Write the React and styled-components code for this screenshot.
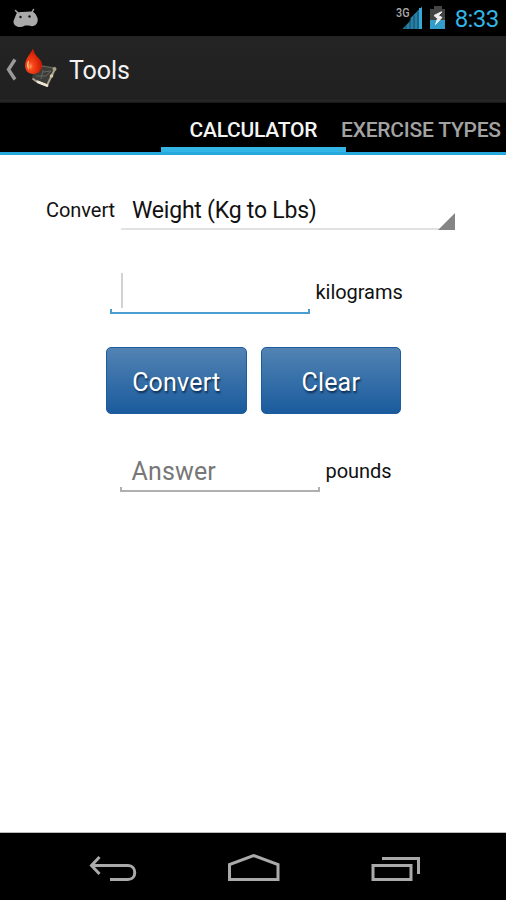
import React from 'react';
import styled, { createGlobalStyle } from 'styled-components';

const GlobalStyle = createGlobalStyle`
  * {
    box-sizing: border-box;
  }
  body {
    margin: 0;
    background: #fff;
    font-family: Roboto, "Liberation Sans", sans-serif;
  }
  button {
    font-family: inherit;
  }
`

const Screen = styled.div`
  width: 506px;
  height: 900px;
  display: flex;
  flex-direction: column;
  overflow: hidden;
  background: #fff;
`

const StatusBar = styled.header`
  height: 36px;
  flex: none;
  display: flex;
  align-items: flex-start;
  justify-content: space-between;
  padding: 0 8px 0 12px;
  background: #000;
`

const StatusIcons = styled.div`
  display: flex;
  gap: 8px;
`

const Clock = styled.span`
  color: #33b5e5;
  font-size: 24px;
  line-height: 38px;
  letter-spacing: -0.6px;
  margin-left: 1px;
  margin-right: -0.6px;
`

const ActionBar = styled.div`
  height: 67px;
  flex: none;
  display: flex;
  background: linear-gradient(#242424, #202020 94%, #2a2a2a 97%, #151515);
`

const Title = styled.h1`
  margin: 0 0 0 9px;
  color: #f3f3f3;
  font-size: 25px;
  font-weight: 400;
  line-height: 69px;
  letter-spacing: -0.1px;
`

const Tabs = styled.nav`
  height: 52px;
  flex: none;
  display: flex;
  padding-left: 161px;
  background: #000;
  border-bottom: 3px solid #26a8dc;
`

const Tab = styled.div`
  flex: none;
  width: ${props => props.$active ? '185px' : '160px'};
  padding-left: ${props => props.$active ? '28.5px' : '0'};
  margin-left: ${props => props.$active ? '0' : '-5px'};
  border-bottom: ${props => props.$active ? '5px solid #33b5e5' : 'none'};
  color: ${props => props.$active ? '#f5f5f5' : '#a3a3a3'};
  font-size: 21px;
  font-weight: 500;
  line-height: 54px;
  height: 49px;
  letter-spacing: ${props => props.$active ? '-0.25px' : '-0.22px'};
  white-space: nowrap;
`

const Content = styled.main`
  flex: 1;
  border-bottom: 1px solid #bbb;
`

const Row = styled.div`
  display: flex;
  height: ${props => props.$height}px;
  margin-top: ${props => props.$top}px;
  padding-left: ${props => props.$left}px;
`

const Label = styled.label`
  color: #111;
  font-size: 20px;
  line-height: ${props => props.$line}px;
  letter-spacing: -0.05px;
  margin-left: ${props => props.$gap || 0}px;
  width: ${props => props.$width ? props.$width + 'px' : 'auto'};
  white-space: nowrap;
`

const Spinner = styled.div`
  display: flex;
  align-items: flex-end;
  justify-content: space-between;
  width: 334px;
  height: 39px;
  padding-left: 11px;
  background: linear-gradient(#e2e2e2, #e2e2e2) 0 37px / 318px 2px no-repeat;
  color: #111;
  font-size: 23px;
  line-height: 39px;
  letter-spacing: -0.22px;
`

const Corner = styled.span`
  width: 17px;
  height: 17px;
  background: #858585;
  clip-path: polygon(100% 0, 100% 100%, 0 100%);
`

const Field = styled.div`
  width: ${props => props.$width}px;
  height: 100%;
  padding-left: 11.5px;
  background:
    linear-gradient(${props => props.$color}, ${props => props.$color}) left bottom / 2px 5px no-repeat,
    linear-gradient(${props => props.$color}, ${props => props.$color}) right bottom / 2px 5px no-repeat,
    linear-gradient(${props => props.$color}, ${props => props.$color}) left bottom / 100% 2px no-repeat;
  color: #777;
  font-size: 25px;
  line-height: 41px;
  letter-spacing: 0.15px;
`

const Cursor = styled.span`
  display: block;
  width: 2px;
  height: 35px;
  margin-left: -0.5px;
  background: #d2d2d2;
`

const Button = styled.button`
  width: 140.5px;
  height: 67px;
  margin-right: 14px;
  padding: 3px 0 0;
  border: 1px solid #1c5b9f;
  border-radius: 5px;
  background: linear-gradient(#5283b3, #1a5b9d);
  color: #fff;
  font-size: 25px;
  letter-spacing: 0.2px;
  text-shadow: 1px 2px 2px #0b2b50;
`

const NavBar = styled.footer`
  height: 67px;
  flex: none;
  background: #000;
`

const AndroidIcon = () => (
  <svg width="28" height="36" viewBox="0 0 28 36">
    <path d="M3.500 10.500l3 3M21.500 9.500l-2 3.500" stroke="#aaa" strokeWidth="1.500" strokeLinecap="round" />
    <path d="M4.500 13.500Q6 11.500 10 12L19 11.500Q22 11.500 23.500 14L25.500 18Q26.500 22 23.500 25Q21 27 17 25.500L13 25.500Q9 28 5 26.500Q1 24.500 1.500 21Z" fill="#aaa" />
    <circle cx="8.500" cy="17" r="1.200" fill="#111" />
    <circle cx="17.500" cy="16.500" r="1.200" fill="#111" />
  </svg>
)

const SignalIcon = () => (
  <svg width="27" height="36" viewBox="0 0 27 36">
    <text x="1" y="17" fontSize="12.500" fontWeight="500" fill="#aaa" textLength="13.500" lengthAdjust="spacingAndGlyphs">3G</text>
    <path d="M27 6.500V29H7.500L15.500 20.500V18Z" fill="#287fa5" />
    <path d="M11 29V25M15 29V20M19 29V15.500M23 29V11.500" stroke="#164b63" strokeWidth="1" />
    <path d="M25.500 29V8" stroke="#36a8d5" strokeWidth="3" />
  </svg>
)

const BatteryIcon = () => (
  <svg width="16" height="36" viewBox="0 0 16 36">
    <path d="M4 6h8v3h3v11H0V9h4z" fill="#444" />
    <path d="M0 20h15v9H0z" fill="#329dc8" />
    <path d="M11 12L4 15.500L7.500 18.500L5.500 24.500L12 17.500L8.500 15.500L12 12Z" fill="#eee" stroke="#eee" />
  </svg>
)

const AppIcon = () => (
  <svg width="60" height="67" viewBox="0 36 60 67">
    <defs>
      <radialGradient id="drop" cx="32%" cy="70%" r="60%">
        <stop offset="0" stopColor="#ff9a55" />
        <stop offset=".25" stopColor="#f9481a" />
        <stop offset="1" stopColor="#cf1d05" />
      </radialGradient>
    </defs>
    <path d="M15 59.500L8.500 69.500L15 79.500" fill="none" stroke="#999" strokeWidth="3.400" />
    <path d="M41 65L55 67L54 75L47 84L32 79L33 72Z" fill="#3c3d38" />
    <path d="M42 66L53 68M43 72L51 71M43 70L41 79M36 76L46 76L51 71" fill="none" stroke="#66665e" strokeWidth="1" />
    <path d="M32.500 78.500L36 81L47 85.500L52 75L55 69" fill="none" stroke="#aaa18b" strokeWidth="2" />
    <path d="M38 82L47 85.500" stroke="#ede7d3" strokeWidth="2.800" strokeLinecap="round" />
    <circle cx="51.500" cy="76" r="1.800" fill="#d7c7a6" />
    <circle cx="54.500" cy="69" r="2" fill="#aaa083" />
    <path d="M33 48.500Q34 54 38.500 58Q43.500 63 41.500 68.500Q39 74 32.500 74Q26 73 25 67Q24.500 61 29 55Q32 51 33 48.500Z" fill="url(#drop)" />
    <path d="M28 61Q25.500 66 29 70Q28 65 29 61Z" fill="#ffe0a4" opacity=".8" />
  </svg>
)

const NavIcons = () => (
  <svg width="506" height="67" viewBox="0 833 506 67" fill="none" stroke="#aaa" strokeWidth="3">
    <path d="M99.500 857L91.500 865.500L99.500 874M92 865.500H128C137 865.500 137 879.500 128 879.500H110" />
    <path d="M229.500 879.500V864.500L253.500 855.500L278 864.500V879.500Z" />
    <path d="M373 865.500H411V879.500H373ZM382 858.500H418.500V874" />
  </svg>
)

const App = () => {
  return (
    <>
      <GlobalStyle />
      <Screen>
        <StatusBar>
          <AndroidIcon />
          <StatusIcons>
            <SignalIcon />
            <BatteryIcon />
            <Clock>8:33</Clock>
          </StatusIcons>
        </StatusBar>
        <ActionBar>
          <AppIcon />
          <Title>Tools</Title>
        </ActionBar>
        <Tabs>
          <Tab $active>CALCULATOR</Tab>
          <Tab>EXERCISE TYPES</Tab>
        </Tabs>
        <Content>
          <Row $top={36} $height={40} $left={46}>
            <Label $line={39} $width={75}>Convert</Label>
            <Spinner>
              Weight (Kg to Lbs)
              <Corner />
            </Spinner>
          </Row>
          <Row $top={42} $height={41} $left={110}>
            <Field $width={200} $color="#4b9fd0"><Cursor /></Field>
            <Label $line={38} $gap={5.5}>kilograms</Label>
          </Row>
          <Row $top={33} $height={67} $left={106}>
            <Button>Convert</Button>
            <Button>Clear</Button>
          </Row>
          <Row $top={37} $height={41} $left={120}>
            <Field $width={200} $color="#b0b0b0">Answer</Field>
            <Label $line={40} $gap={5.5}>pounds</Label>
          </Row>
        </Content>
        <NavBar>
          <NavIcons />
        </NavBar>
      </Screen>
    </>
  )
};

export default App
